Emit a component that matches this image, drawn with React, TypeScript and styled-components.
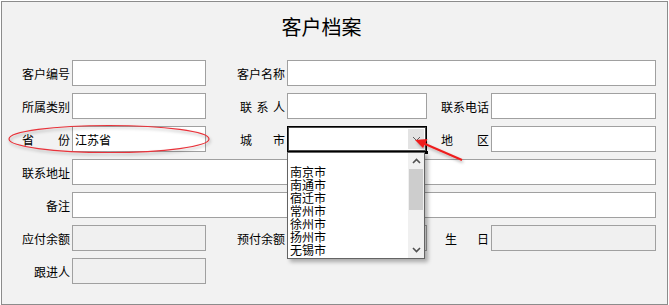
import React from 'react';
import styled, { createGlobalStyle } from 'styled-components';

const GlobalStyle = createGlobalStyle`
  html, body {
    margin: 0;
    padding: 0;
    background: #ffffff;
  }
  body {
    font-family: 'Noto Sans CJK SC', 'Liberation Sans', sans-serif;
    font-size: 12px;
    color: #000;
  }
`;

const Page = styled.div`
  position: relative;
  width: 669px;
  height: 305px;
  padding: 1px 0 0 1px;
  box-sizing: border-box;
`;

const Window = styled.div`
  width: 667px;
  height: 304px;
  box-sizing: border-box;
  border: 1px solid #8c8c8c;
  background: #f2f2f2;
  display: flex;
  flex-direction: column;
`;

const Title = styled.h1`
  margin: 0;
  height: 58px;
  box-sizing: border-box;
  padding: 15px 26px 0 0;
  font-size: 20px;
  line-height: 20px;
  font-weight: normal;
  text-align: center;
`;

const Form = styled.div`
  display: grid;
  grid-template-columns: 70px 134px 81px 140px 64px 165px;
  grid-auto-rows: 26px;
  row-gap: 7px;
`;

const Label = styled.div`
  display: flex;
  align-items: center;
  justify-content: flex-end;
  padding-right: 2px;
  white-space: nowrap;
`;

const Spread = styled.span<{ $w: number }>`
  display: inline-flex;
  justify-content: space-between;
  width: ${(p) => p.$w}px;
`;

const Field = styled.div<{ $span?: number; $disabled?: boolean }>`
  grid-column: span ${(p) => p.$span ?? 1};
  box-sizing: border-box;
  border: 1px solid #a0a0a0;
  background: ${(p) => (p.$disabled ? '#f0f0f0' : '#ffffff')};
  display: flex;
  align-items: center;
  padding-left: 2px;
`;

const ComboWrap = styled.div`
  position: relative;
`;

const ComboBox = styled.div`
  height: 26px;
  box-sizing: border-box;
  border: 1px solid #000;
  box-shadow: inset 0 0 0 1px #4a4a4a;
  background: #fff;
  display: flex;
  justify-content: flex-end;
  padding: 2px;
`;

const ComboButton = styled.div`
  width: 16px;
  background: #e3e3e3;
  display: flex;
  align-items: center;
  justify-content: center;
`;

const FocusDot = styled.div`
  position: absolute;
  right: -1px;
  bottom: -2px;
  width: 3px;
  height: 3px;
  background: #000;
`;

const DropList = styled.div`
  position: absolute;
  left: 0;
  top: 26px;
  width: 138px;
  height: 107px;
  box-sizing: border-box;
  border: 1px solid #646464;
  background: #fff;
  box-shadow: 3px 3px 4px rgba(0, 0, 0, 0.3);
  display: flex;
  z-index: 2;
`;

const Items = styled.div`
  flex: 1;
  overflow: hidden;
  padding: 12px 0 0 2px;
  font-size: 12px;
  line-height: 13px;
`;

const Item = styled.div`
  height: 13px;
`;

const ScrollBar = styled.div`
  width: 16px;
  background: #f0f0f0;
  display: flex;
  flex-direction: column;
  align-items: stretch;
`;

const ScrollArrow = styled.div`
  height: 16px;
  display: flex;
  align-items: center;
  justify-content: center;
`;

const Track = styled.div`
  flex: 1;
  padding: 0 1px;
`;

const Thumb = styled.div`
  height: 41px;
  background: #cdcdcd;
`;

const Overlay = styled.svg`
  position: absolute;
  left: 0;
  top: 0;
  pointer-events: none;
  z-index: 3;
`;

// only the first seven fit above the fold of the list
const cities = ['南京市', '南通市', '宿迁市', '常州市', '徐州市', '扬州市', '无锡市'];

const Chevron: React.FC<{ up?: boolean; color?: string; w?: number }> = ({ up, color = '#606060', w = 1 }) => (
  <svg width="9" height="6" viewBox="0 0 9 6">
    <polyline
      points={up ? '1,5 4.5,1.5 8,5' : '1,1 4.5,4.5 8,1'}
      fill="none"
      stroke={color}
      strokeWidth={w}
    />
  </svg>
);

const Spaced: React.FC<{ text: string; w: number }> = ({ text, w }) => (
  <Spread $w={w}>
    {text.split('').map((c, i) => (
      <span key={i}>{c}</span>
    ))}
  </Spread>
);

const App: React.FC = () => (
  <Page>
    <GlobalStyle />
    <Window>
      <Title>客户档案</Title>
      <Form>
        <Label>客户编号</Label>
        <Field />
        <Label>客户名称</Label>
        <Field $span={3} />

        <Label>所属类别</Label>
        <Field />
        <Label>
          <Spaced text="联系人" w={45} />
        </Label>
        <Field />
        <Label>联系电话</Label>
        <Field />

        <Label>
          <Spaced text="省份" w={48} />
        </Label>
        <Field>江苏省</Field>
        <Label>
          <Spaced text="城市" w={45} />
        </Label>
        <ComboWrap>
          <ComboBox>
            <ComboButton>
              <Chevron />
            </ComboButton>
          </ComboBox>
          <FocusDot />
          <DropList>
            <Items>
              {cities.map((c) => (
                <Item key={c}>{c}</Item>
              ))}
            </Items>
            <ScrollBar>
              <ScrollArrow>
                <Chevron up color="#505050" w={1.6} />
              </ScrollArrow>
              <Track>
                <Thumb />
              </Track>
              <ScrollArrow>
                <Chevron color="#505050" w={1.6} />
              </ScrollArrow>
            </ScrollBar>
          </DropList>
        </ComboWrap>
        <Label>
          <Spaced text="地区" w={48} />
        </Label>
        <Field />

        <Label>联系地址</Label>
        <Field $span={5} />

        <Label>备注</Label>
        <Field $span={5} />

        <Label>应付余额</Label>
        <Field $disabled />
        <Label>预付余额</Label>
        <Field $disabled />
        <Label>
          <Spaced text="生日" w={44} />
        </Label>
        <Field $disabled />

        <Label>跟进人</Label>
        <Field $disabled />
      </Form>
    </Window>
    <Overlay width="669" height="305" viewBox="0 0 669 305">
      <defs>
        <filter id="shadow" x="-10%" y="-50%" width="120%" height="200%">
          <feDropShadow dx="1" dy="2" stdDeviation="1.5" floodColor="#000" floodOpacity="0.3" />
        </filter>
      </defs>
      <ellipse cx="109" cy="139" rx="100" ry="13.5" fill="none" stroke="#e8333a" strokeWidth="1.2" filter="url(#shadow)" />
      <g filter="url(#shadow)">
        <line x1="462" y1="160" x2="424" y2="143.5" stroke="#ee1c1c" strokeWidth="2" />
        <polygon points="415,140 427.5,139 423,148" fill="#ee1c1c" />
      </g>
    </Overlay>
  </Page>
);

export default App;
